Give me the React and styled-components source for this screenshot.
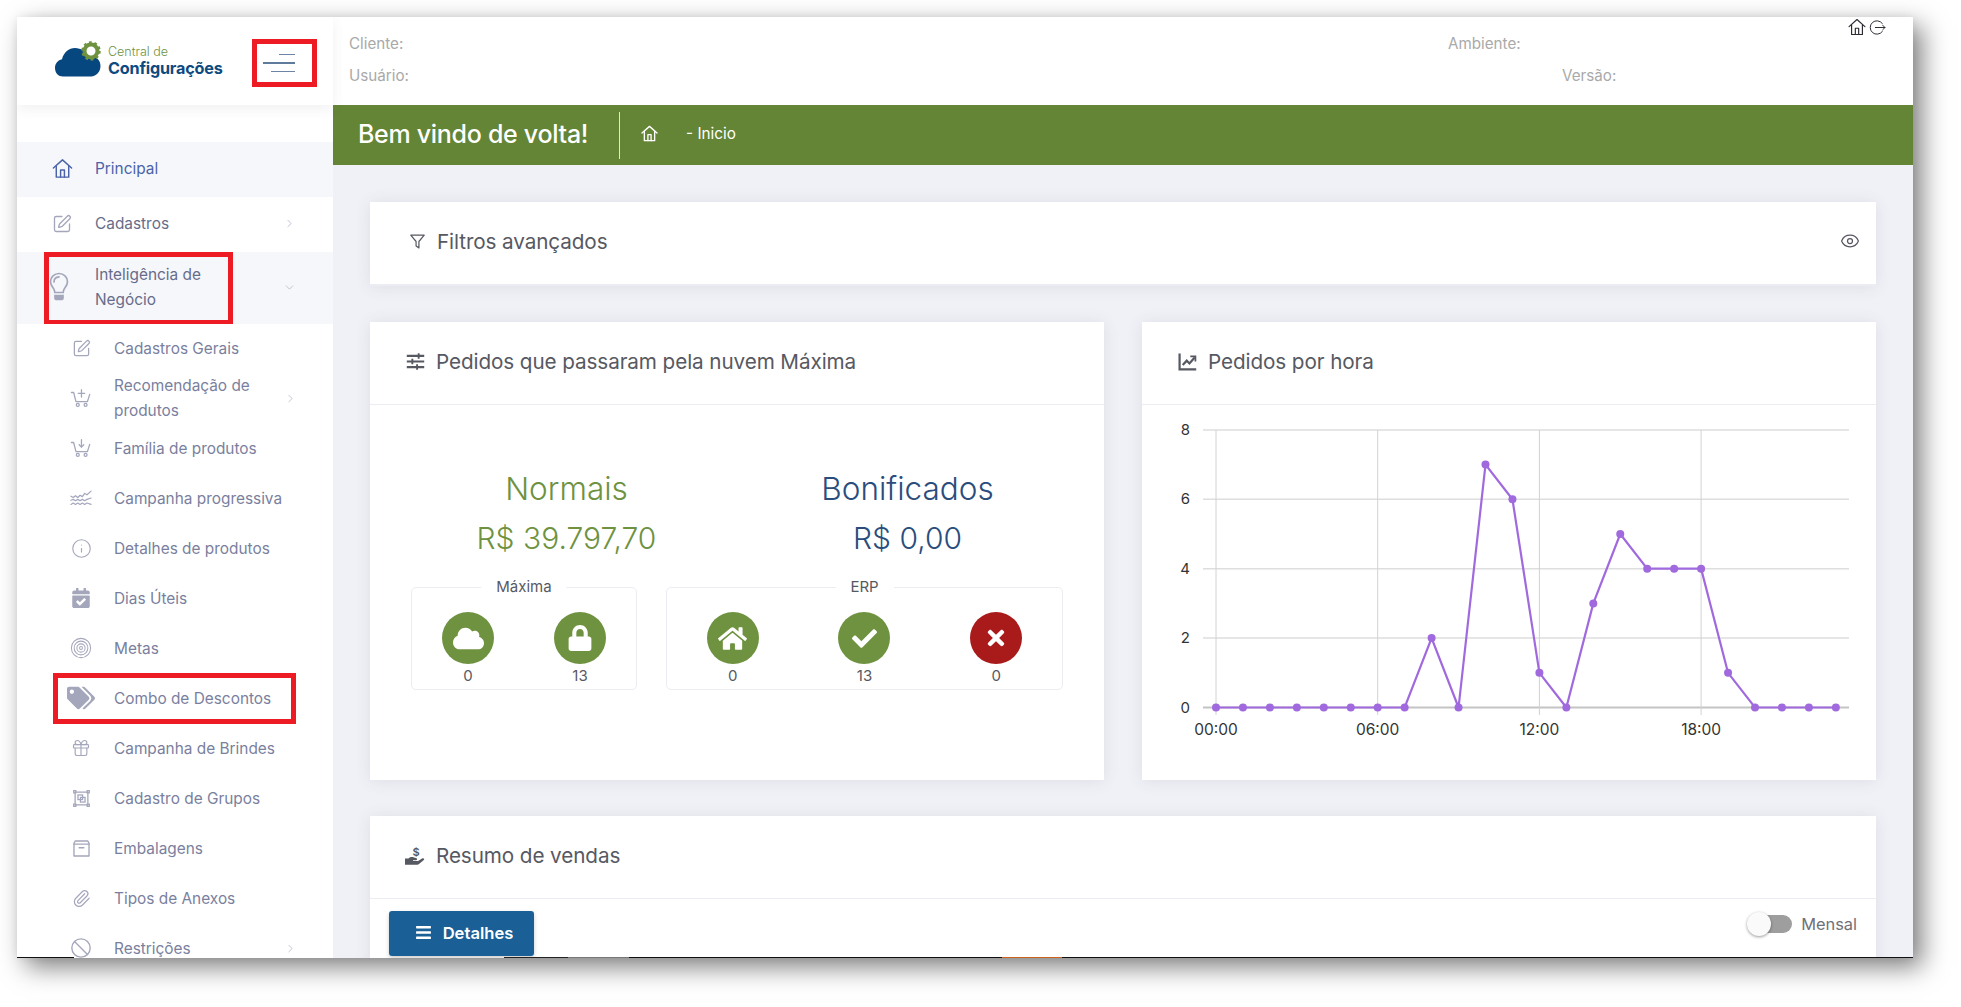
import React from "react";
import styled, { createGlobalStyle } from "styled-components";
import {
  ChevronRight,
  ChevronDown,
  SquarePen,
  Info,
  Gift,
  Paperclip,
  Ban,
  Eye,
} from "lucide-react";
import {
  FaCloud,
  FaLock,
  FaHome,
  FaCheck,
  FaTimes,
  FaBars,
  FaTags,
  FaCalendarCheck,
} from "react-icons/fa";

const FONT = `Inter, "Noto Sans", "Liberation Sans", sans-serif`;

const GlobalStyle = createGlobalStyle`
  html, body {
    margin: 0;
    padding: 0;
    background: #fff;
    overflow: hidden;
  }
  body {
    font-family: ${FONT};
  }
  * {
    box-sizing: border-box;
  }
`;

const Stage = styled.div`
  width: 1961px;
  height: 1007px;
  padding: 17px 0 0 17px;
`;

const Window = styled.div`
  position: relative;
  width: 1896px;
  height: 941px;
  display: grid;
  grid-template-columns: 316px 1fr;
  overflow: hidden;
  background: #f0f1f7;
`;

const WindowShadow = styled.div`
  width: 1896px;
  height: 941px;
  box-shadow: 9px 9px 24px rgba(0, 0, 0, 0.5), 0 0 8px rgba(0, 0, 0, 0.06);
`;

const Sidebar = styled.aside`
  display: flex;
  flex-direction: column;
  background: #fff;
  min-height: 0;
`;

const LogoBar = styled.div`
  position: relative;
  z-index: 2;
  height: 88px;
  flex: none;
  display: flex;
  align-items: center;
  padding: 0 16px 0 38px;
  background: #fff;
  box-shadow: 0 4px 12px rgba(80, 80, 100, 0.08);
`;

const Logo = styled.div`
  display: flex;
  align-items: center;
  gap: 5px;
`;

const LogoText = styled.div`
  display: flex;
  flex-direction: column;
`;

const LogoSmall = styled.span`
  font-size: 12.5px;
  line-height: 15px;
  font-weight: 300;
  color: #6e923f;
`;

const LogoBig = styled.span`
  font-size: 16.2px;
  line-height: 19px;
  font-weight: 700;
  color: #0d4a80;
  letter-spacing: -0.2px;
`;

const MenuButton = styled.div`
  width: 65px;
  height: 48px;
  margin-left: auto;
  margin-top: 4px;
  border: 5px solid #ed1c24;
  display: flex;
  flex-direction: column;
  align-items: flex-end;
  justify-content: center;
  gap: 7px;
  padding-right: 17px;
`;

const MenuLine = styled.span`
  display: block;
  width: ${(p) => p.$w}px;
  height: ${(p) => (p.$thick ? 2 : 1)}px;
  background: ${(p) => (p.$thick ? "#5f7a9b" : "#6d86a5")};
`;

const Nav = styled.nav`
  padding-top: 37px;
  flex: 1;
  min-height: 0;
`;

const NavRow = styled.div`
  position: relative;
  display: flex;
  align-items: center;
  height: ${(p) => p.$h || 55}px;
  padding: 0 36px 2px ${(p) => (p.$sub ? 49 : 30)}px;
  background: ${(p) => (p.$active ? "#f6f7fb" : "#fff")};
  color: ${(p) => (p.$current ? "#4a63a8" : p.$sub ? "#7a7f9e" : "#666c8a")};
  font-size: 15.4px;
  line-height: 25px;
`;

const NavIcon = styled.span`
  width: 30px;
  height: 26px;
  margin-left: ${(p) => p.$shift || 0}px;
  margin-right: ${(p) => 18 - (p.$shift || 0)}px;
  flex: none;
  display: flex;
  align-items: center;
  justify-content: center;
  color: ${(p) => (p.$current ? "#4a63a8" : "#a4a7bc")};
`;

const NavText = styled.span`
  flex: ${(p) => (p.$narrow ? "none" : 1)};
  width: ${(p) => (p.$narrow ? "170px" : "auto")};
  min-width: 0;
`;

const Caret = styled.span`
  display: flex;
  color: #b0b3c4;
  margin-left: auto;
  margin-right: 1px;
`;

const Highlight = styled.span`
  position: absolute;
  left: ${(p) => p.$left}px;
  top: ${(p) => p.$top}px;
  width: ${(p) => p.$w}px;
  height: ${(p) => p.$h}px;
  border: 5px solid #ed1c24;
  pointer-events: none;
`;

const Main = styled.main`
  display: flex;
  flex-direction: column;
  min-width: 0;
  min-height: 0;
`;

const TopBar = styled.header`
  position: relative;
  height: 88px;
  flex: none;
  background: #fff;
  display: grid;
  grid-template-columns: 1099px 1fr;
  grid-template-rows: 32px 32px;
  padding: 11px 0 0 16px;
  color: #a9a9a9;
  font-size: 15.2px;
  line-height: 32px;
`;

const VersionLabel = styled.span`
  padding-left: 114px;
`;

const TopIcons = styled.div`
  position: absolute;
  right: 27px;
  top: 0;
  display: flex;
  align-items: center;
  gap: 2px;
  color: #2b2b33;
`;

const GreenBar = styled.div`
  height: 60px;
  flex: none;
  background: #648535;
  display: flex;
  align-items: center;
  padding-left: 25px;
  color: #fff;
`;

const PageTitle = styled.h1`
  margin: 0;
  font-size: 25px;
  font-weight: 500;
  letter-spacing: -0.3px;
  padding-right: 31px;
  height: 47px;
  line-height: 45px;
  border-right: 1px solid rgba(255, 255, 255, 0.8);
`;

const Crumb = styled.span`
  display: flex;
  align-items: center;
  gap: 27px;
  padding-left: 20px;
  font-size: 15.3px;
  margin-top: -3px;
`;

const Content = styled.div`
  padding: 37px 37px 0;
  display: flex;
  flex-direction: column;
  gap: 36px;
`;

const Card = styled.section`
  background: #fff;
  box-shadow: 0 1px 15px rgba(69, 65, 78, 0.1);
`;

const CardHead = styled.div`
  height: ${(p) => p.$h || 83}px;
  display: flex;
  align-items: center;
  padding: 0 ${(p) => p.$pr || 36}px 4px ${(p) => p.$pl || 36}px;
  gap: ${(p) => p.$gap || 12}px;
  border-bottom: ${(p) => (p.$soft ? 2 : 1)}px solid #ebedf2;
  color: #575962;
  font-size: 20.7px;
  font-weight: 400;
  letter-spacing: -0.1px;
`;

const HeadIcon = styled.span`
  display: flex;
  width: 18px;
  justify-content: center;
  color: #575962;

  svg {
    flex: none;
  }
`;

const HeadEnd = styled.span`
  margin-left: auto;
  display: flex;
  color: #575962;
`;

const TwoCards = styled.div`
  display: grid;
  grid-template-columns: 734px 734px;
  gap: 38px;
`;

const TallCard = styled(Card)`
  height: 458px;
`;

const Totals = styled.div`
  padding: 64px 26px 0;
  display: grid;
  grid-template-columns: 1fr 1fr;
  text-align: center;
`;

const Total = styled.div`
  color: ${(p) => p.$color};
  font-size: 31.5px;
  line-height: 40px;
  font-weight: 300;
`;

const TotalValue = styled.div`
  margin-top: 9px;
  font-size: 30px;
  line-height: 40px;
  font-weight: 300;
`;

const Boxes = styled.div`
  margin: 29px 41px 0;
  display: grid;
  grid-template-columns: 226px 397px;
  gap: 29px;
`;

const Box = styled.div`
  position: relative;
  height: 103px;
  border: 1px solid #ebedf2;
  border-radius: 5px;
  padding-top: 24px;
  display: flex;
  justify-content: space-around;
`;

const BoxLegend = styled.span`
  position: absolute;
  top: -11px;
  left: 50%;
  transform: translateX(-50%);
  background: #fff;
  padding: 0 15px;
  font-size: 15px;
  line-height: 20px;
  color: #575962;
`;

const Stat = styled.div`
  width: 52px;
  display: flex;
  flex-direction: column;
  align-items: center;
  gap: 2px;
  font-size: 15px;
  line-height: 20px;
  color: #575962;
`;

const StatCircle = styled.span`
  width: 52px;
  height: 52px;
  border-radius: 50%;
  background: ${(p) => (p.$red ? "#a91b1b" : "#6e923f")};
  color: #fff;
  display: flex;
  align-items: center;
  justify-content: center;
`;

const ChartSvg = styled.svg`
  display: block;
  font-family: ${FONT};
`;

const ControlRow = styled.div`
  display: flex;
  align-items: flex-start;
  justify-content: space-between;
  padding: 12px 19px;
`;

const DetailsButton = styled.button`
  width: 145px;
  height: 45px;
  border: 0;
  border-radius: 3px;
  background: #1a6096;
  color: #fff;
  font-family: ${FONT};
  font-size: 16.6px;
  font-weight: 600;
  display: flex;
  align-items: center;
  justify-content: center;
  gap: 11px;
  padding: 0 0 2px 5px;
  box-shadow: 0 2px 4px rgba(0, 0, 0, 0.2);
`;

const ToggleWrap = styled.div`
  display: flex;
  align-items: center;
  gap: 9px;
  margin-top: 3px;
  font-size: 16.4px;
  color: #6f7079;
`;

const ToggleTrack = styled.span`
  position: relative;
  display: block;
  width: 42px;
  height: 18px;
  border-radius: 9px;
  background: #9e9e9e;
`;

const ToggleKnob = styled.span`
  position: absolute;
  left: -3px;
  top: -3px;
  width: 24px;
  height: 24px;
  border-radius: 50%;
  background: #fafafa;
  box-shadow: 0 1px 3px rgba(0, 0, 0, 0.4);
`;

const BottomEdge = styled.div`
  position: absolute;
  left: 0;
  right: 0;
  bottom: 0;
  height: 1px;
  display: flex;
`;

const EdgePiece = styled.span`
  display: block;
  width: ${(p) => p.$w}px;
  flex: ${(p) => (p.$w ? "none" : 1)};
  background: ${(p) => p.$c};
`;

const Line = (props) => (
  <svg width="24" height="24" viewBox="0 0 24 24" fill="none" stroke="currentColor" strokeWidth="1.5" strokeLinecap="round" strokeLinejoin="round" {...props} />
);

const HomeIcon = ({ size = 20, ...rest }) => (
  <Line width={size} height={size} {...rest}>
    <path d="M2.5 11.5 12 3l9.500 8.500" />
    <path d="M5.500 9.500V21h13V9.500" />
    <path d="M10 21v-7.500h4V21" />
  </Line>
);

const CartIcon = ({ plus }) => (
  <Line width="22" height="22" strokeWidth="1.4">
    <path d="M1.500 6H4l2.500 10h12.500l2.500-8" />
    <circle cx="8.500" cy="19.500" r="1.600" />
    <circle cx="17" cy="19.500" r="1.600" />
    <path d="M12.500 3v8" />
    {plus ? <path d="M9 7h7" /> : <path d="M10 8.500l2.500 2.500L15 8.500" />}
  </Line>
);

const WavesIcon = () => (
  <Line width="22" height="22" strokeWidth="1.300">
    <path d="M1 10l2.500 1.500L6 9.500l2.500 2L11 9l2.500 1.500L16 7l2.500 1.500L23 4.500" />
    <path d="M1 14.500l2.500-1L6 15l2.500-1.500L11 15l2.500-1.500L16 15l2.500-1.500L23 12" />
    <path d="M1 19l2.500-1.500L6 19l2.500-1.500L11 19l2.500-1.500L16 19l2.500-1.500L23 19" />
  </Line>
);

const TargetIcon = () => (
  <Line width="22" height="22" strokeWidth="1.100">
    <circle cx="12" cy="12" r="10.500" />
    <circle cx="12" cy="12" r="7.500" />
    <circle cx="12" cy="12" r="4.500" />
    <circle cx="12" cy="12" r="1.600" />
  </Line>
);

const GroupIcon = () => (
  <Line width="17" height="17" strokeWidth="1.800" strokeLinecap="butt" strokeLinejoin="miter">
    <rect x="3" y="3" width="18" height="18" />
    <path d="M1 1h3v3H1zM20 1h3v3h-3zM1 20h3v3H1zM20 20h3v3h-3z" />
    <rect x="7" y="7" width="6.500" height="6.500" />
    <rect x="10.500" y="10.500" width="6.500" height="6.500" />
  </Line>
);

const BoxIcon = () => (
  <Line width="19" height="19" strokeWidth="1.700">
    <path d="M4 2.500h16l1.500 3V21.500h-19V5.500z" />
    <path d="M2.500 6.500h19" />
    <path d="M9 11h6" />
  </Line>
);

const BulbIcon = () => (
  <svg width="20" height="30" viewBox="0 0 20 30" fill="none" stroke="currentColor" strokeWidth="1.700" strokeLinecap="round">
    <path d="M10 1.500c-4.700 0-8.500 3.600-8.500 8.200 0 3.200 1.700 5 3 6.800.9 1.300 1.200 2.500 1.300 4h8.400c.1-1.500.4-2.700 1.300-4 1.300-1.800 3-3.600 3-6.800 0-4.600-3.800-8.200-8.500-8.200z" />
    <path d="M5 10c0-3 2.200-5 5-5.200" />
    <path d="M6 23.500h8v2.200c0 1-.8 1.800-1.800 1.800H7.800c-1 0-1.800-.8-1.800-1.800z" fill="currentColor" />
  </svg>
);

const FilterIcon = () => (
  <Line width="17" height="17" strokeWidth="1.700">
    <path d="M2.500 3h19l-7.500 9v9l-4-2.500V12z" />
  </Line>
);

const LogoutIcon = () => (
  <Line width="17" height="17" strokeWidth="1.400">
    <path d="M19 6.500a9.500 9.500 0 1 0 0 11" />
    <path d="M9 12h13.500M19.500 9l3 3-3 3" />
  </Line>
);

const SlidersIcon = () => (
  <svg width="19" height="19" viewBox="0 0 24 24" fill="none" stroke="currentColor" strokeWidth="2.800">
    <path d="M1 5h22M1 12h22M1 19h22" />
    <path d="M16 1.500v7M8 8.500v7M14 15.500v7" strokeWidth="2.400" />
  </svg>
);

const TrendIcon = () => (
  <svg width="19" height="19" viewBox="0 0 24 24" fill="none" stroke="currentColor" strokeWidth="2.800">
    <path d="M2 2v20h21" />
    <path d="M6 16.500l5-5.500 3.500 3.500L21 7" />
    <path d="M15.500 5.500H22V12" strokeWidth="2.200" />
  </svg>
);

const HandCoinIcon = () => (
  <svg width="22" height="22" viewBox="0 0 22 22" fill="currentColor">
    <text x="12" y="11.500" fontSize="11" fontWeight="600" textAnchor="middle" fontFamily={FONT}>$</text>
    <path d="M1 14.500h3.500c1.500-1.500 3.500-1.800 5-1.200l3 1c1 .4.800 1.900-.4 1.900H9v.8h5l4.500-2.700c1.200-.6 2.400.8 1.300 1.800l-4.800 4c-.5.400-1 .6-1.700.6H1z" />
  </svg>
);

const LogoMark = () => (
  <svg width="48" height="40" viewBox="0 0 48 40">
    <path d="M8 35.500c-4.500 0-8-3.500-8-8.500 0-4.500 3-8 7-8.700C8.500 11.500 14 7 20 7c6 0 11 3.500 13 8.500 1-.3 2-.4 3-.4 5.500 0 9.500 4.500 9.500 10S41.500 35.500 36 35.500z" fill="#064780" />
    <circle cx="36" cy="10" r="6.500" fill="none" stroke="#6e923f" strokeWidth="4" />
    <circle cx="36" cy="10" r="8.500" fill="none" stroke="#6e923f" strokeWidth="2.500" strokeDasharray="2.700 2.700" />
  </svg>
);

const HOURS = [0, 0, 0, 0, 0, 0, 0, 0, 2, 0, 7, 6, 1, 0, 3, 5, 4, 4, 4, 1, 0, 0, 0, 0];
const chartX = (hour) => 74 + hour * 26.95;
const chartY = (value) => 302.500 - value * 34.700;

const HourChart = () => {
  const points = HOURS.map((v, i) => `${chartX(i)},${chartY(v)}`).join(" ");
  return (
    <ChartSvg width="734" height="375" viewBox="0 0 734 375">
      {[8, 6, 4, 2, 0].map((v) => (
        <g key={v}>
          <line x1="61" x2="707" y1={chartY(v)} y2={chartY(v)} stroke={v === 0 ? "#c4c4c4" : "#dedede"} strokeWidth={v === 0 ? 2 : 1.500} />
          <text x="48" y={chartY(v) + 5} textAnchor="end" fontSize="15" fill="#333">{v}</text>
        </g>
      ))}
      {[0, 6, 12, 18].map((h) => (
        <g key={h}>
          <line x1={chartX(h)} x2={chartX(h)} y1="25" y2="310" stroke="#d2d2d2" />
          <text x={chartX(h)} y="330" textAnchor="middle" fontSize="15.500" fill="#333">{`${String(h).padStart(2, "0")}:00`}</text>
        </g>
      ))}
      <polyline points={points} fill="none" stroke="#a06ade" strokeWidth="2.200" />
      {HOURS.map((v, i) => (
        <circle key={i} cx={chartX(i)} cy={chartY(v)} r="4" fill="#a06ade" />
      ))}
    </ChartSvg>
  );
};

const chevron = <ChevronRight size={13} strokeWidth={1.400} />;

const SUB_ITEMS = [
  { label: "Cadastros Gerais", icon: <SquarePen size={19} strokeWidth={1.600} /> },
  { label: "Recomendação de produtos", icon: <CartIcon plus />, caret: true },
  { label: "Família de produtos", icon: <CartIcon /> },
  { label: "Campanha progressiva", icon: <WavesIcon /> },
  { label: "Detalhes de produtos", icon: <Info size={21} strokeWidth={1.300} /> },
  { label: "Dias Úteis", icon: <FaCalendarCheck size={20} /> },
  { label: "Metas", icon: <TargetIcon /> },
  { label: "Combo de Descontos", icon: <FaTags size={28} />, box: true },
  { label: "Campanha de Brindes", icon: <Gift size={20} strokeWidth={1.400} /> },
  { label: "Cadastro de Grupos", icon: <GroupIcon /> },
  { label: "Embalagens", icon: <BoxIcon /> },
  { label: "Tipos de Anexos", icon: <Paperclip size={19} strokeWidth={1.500} /> },
  { label: "Restrições", icon: <Ban size={22} strokeWidth={1.500} />, caret: true },
];

export default function App() {
  return (
    <Stage>
      <GlobalStyle />
      <WindowShadow>
        <Window>
          <Sidebar>
            <LogoBar>
              <Logo>
                <LogoMark />
                <LogoText>
                  <LogoSmall>Central de</LogoSmall>
                  <LogoBig>Configurações</LogoBig>
                </LogoText>
              </Logo>
              <MenuButton>
                <MenuLine $w={16} />
                <MenuLine $w={32} $thick />
                <MenuLine $w={24} />
              </MenuButton>
            </LogoBar>
            <Nav>
              <NavRow $active $current>
                <NavIcon $current><HomeIcon size={23} /></NavIcon>
                <NavText>Principal</NavText>
              </NavRow>
              <NavRow>
                <NavIcon><SquarePen size={20} strokeWidth={1.600} /></NavIcon>
                <NavText>Cadastros</NavText>
                <Caret>{chevron}</Caret>
              </NavRow>
              <NavRow $active $h={72}>
                <NavIcon $shift={-3}><BulbIcon /></NavIcon>
                <NavText>Inteligência de<br />Negócio</NavText>
                <Caret><ChevronDown size={13} strokeWidth={1.400} /></Caret>
                <Highlight $left={27} $top={0} $w={189} $h={73} />
              </NavRow>
              {SUB_ITEMS.map((item) => (
                <NavRow key={item.label} $sub $h={50}>
                  <NavIcon>{item.icon}</NavIcon>
                  <NavText $narrow>{item.label}</NavText>
                  {item.caret && <Caret>{chevron}</Caret>}
                  {item.box && <Highlight $left={36} $top={-1} $w={243} $h={51} />}
                </NavRow>
              ))}
            </Nav>
          </Sidebar>
          <Main>
            <TopBar>
              <span>Cliente:</span>
              <span>Ambiente:</span>
              <span>Usuário:</span>
              <VersionLabel>Versão:</VersionLabel>
              <TopIcons>
                <HomeIcon size={20} strokeWidth={1.400} />
                <LogoutIcon />
              </TopIcons>
            </TopBar>
            <GreenBar>
              <PageTitle>Bem vindo de volta!</PageTitle>
              <Crumb>
                <HomeIcon size={19} strokeWidth={1.700} />
                <span>- Inicio</span>
              </Crumb>
            </GreenBar>
            <Content>
              <Card>
                <CardHead $h={84} $soft $pl={38} $pr={16} $gap={11}>
                  <HeadIcon><FilterIcon /></HeadIcon>
                  Filtros avançados
                  <HeadEnd><Eye size={20} strokeWidth={1.500} /></HeadEnd>
                </CardHead>
              </Card>
              <TwoCards>
                <TallCard>
                  <CardHead>
                    <HeadIcon><SlidersIcon /></HeadIcon>
                    Pedidos que passaram pela nuvem Máxima
                  </CardHead>
                  <Totals>
                    <Total $color="#6e923f">
                      Normais
                      <TotalValue>R$ 39.797,70</TotalValue>
                    </Total>
                    <Total $color="#2a4d7d">
                      Bonificados
                      <TotalValue>R$ 0,00</TotalValue>
                    </Total>
                  </Totals>
                  <Boxes>
                    <Box>
                      <BoxLegend>Máxima</BoxLegend>
                      <Stat><StatCircle><FaCloud size={31} /></StatCircle>0</Stat>
                      <Stat><StatCircle><FaLock size={26} /></StatCircle>13</Stat>
                    </Box>
                    <Box>
                      <BoxLegend>ERP</BoxLegend>
                      <Stat><StatCircle><FaHome size={29} /></StatCircle>0</Stat>
                      <Stat><StatCircle><FaCheck size={25} /></StatCircle>13</Stat>
                      <Stat><StatCircle $red><FaTimes size={24} /></StatCircle>0</Stat>
                    </Box>
                  </Boxes>
                </TallCard>
                <TallCard>
                  <CardHead>
                    <HeadIcon><TrendIcon /></HeadIcon>
                    Pedidos por hora
                  </CardHead>
                  <HourChart />
                </TallCard>
              </TwoCards>
              <Card>
                <CardHead>
                  <HeadIcon><HandCoinIcon /></HeadIcon>
                  Resumo de vendas
                </CardHead>
                <ControlRow>
                  <DetailsButton>
                    <FaBars size={17} />
                    Detalhes
                  </DetailsButton>
                  <ToggleWrap>
                    <ToggleTrack><ToggleKnob /></ToggleTrack>
                    Mensal
                  </ToggleWrap>
                </ControlRow>
              </Card>
            </Content>
          </Main>
          <BottomEdge>
            <EdgePiece $w={57} $c="#111" />
            <EdgePiece $w={430} $c="transparent" />
            <EdgePiece $w={64} $c="#222" />
            <EdgePiece $w={61} $c="#777" />
            <EdgePiece $w={373} $c="#111" />
            <EdgePiece $w={60} $c="#c8641e" />
            <EdgePiece $c="#111" />
          </BottomEdge>
        </Window>
      </WindowShadow>
    </Stage>
  );
}
